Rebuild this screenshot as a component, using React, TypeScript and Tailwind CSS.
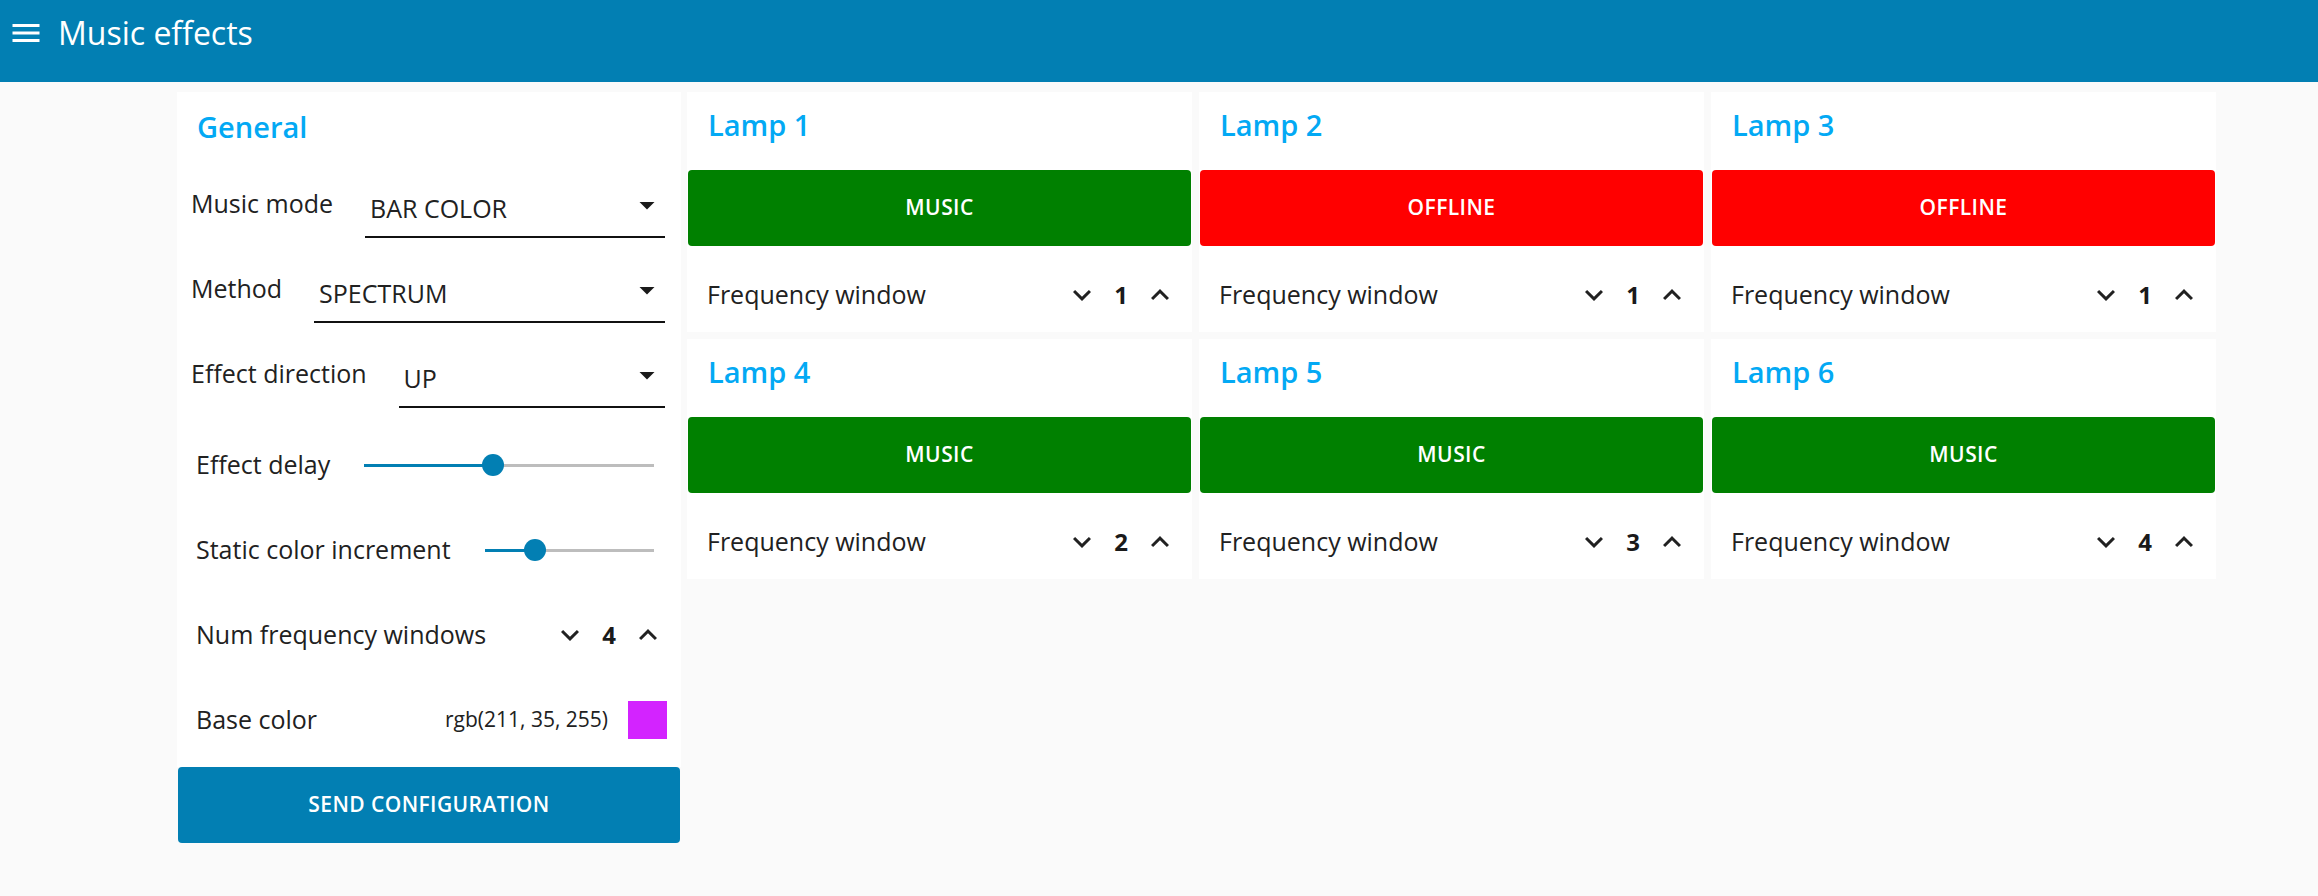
type Lamp = {
  name: string;
  status: "MUSIC" | "OFFLINE";
  freqWindow: number;
};

const lamps: Lamp[] = [
  { name: "Lamp 1", status: "MUSIC", freqWindow: 1 },
  { name: "Lamp 2", status: "OFFLINE", freqWindow: 1 },
  { name: "Lamp 3", status: "OFFLINE", freqWindow: 1 },
  { name: "Lamp 4", status: "MUSIC", freqWindow: 2 },
  { name: "Lamp 5", status: "MUSIC", freqWindow: 3 },
  { name: "Lamp 6", status: "MUSIC", freqWindow: 4 },
];

const MenuIcon = () => (
  <svg viewBox="0 0 24 24" className="w-9 h-9 fill-white">
    <path d="M3 18h18v-2H3v2zm0-5h18v-2H3v2zm0-7v2h18V6H3z" />
  </svg>
);

const ExpandMore = () => (
  <svg viewBox="0 0 24 24" className="w-9 h-9 fill-[#212121]">
    <path d="M16.59 8.59 12 13.17 7.41 8.59 6 10l6 6 6-6z" />
  </svg>
);

const ExpandLess = () => (
  <svg viewBox="0 0 24 24" className="w-9 h-9 fill-[#212121]">
    <path d="m12 8-6 6 1.41 1.41L12 10.83l4.59 4.58L18 14z" />
  </svg>
);

const ArrowDropDown = () => (
  <svg viewBox="0 0 24 24" className="w-9 h-9 mt-[1px] fill-[#1a1a1a]">
    <path d="M7 10l5 5 5-5z" />
  </svg>
);

const Stepper = ({ value }: { value: number }) => (
  <div className="flex items-center">
    <ExpandMore />
    <span className="w-[42px] text-center text-[24px] font-bold text-[#1a1a1a]">
      {value}
    </span>
    <ExpandLess />
  </div>
);

const SelectRow = ({
  label,
  value,
  last,
}: {
  label: string;
  value: string;
  last?: boolean;
}) => (
  <div
    className={`flex items-start pl-[14px] pr-[16px] ${last ? "h-[66px]" : "h-[85px]"}`}
  >
    <span className="leading-[34px] whitespace-nowrap">{label}</span>
    <div className="ml-[32px] flex-1 flex items-start h-[52px] border-b-2 border-[#111]">
      <span className="flex-1 pt-[5px] pl-[5px] leading-[34px]">{value}</span>
      <ArrowDropDown />
    </div>
  </div>
);

const Slider = ({ value }: { value: number }) => (
  <div className="relative flex-1 h-[22px]">
    <div className="absolute left-0 right-0 top-[10px] h-[3px] bg-[#bdbdbd]" />
    <div
      className="absolute left-0 top-[10px] h-[3px] bg-[#027fb3]"
      style={{ width: `${value}%` }}
    />
    <div
      className="absolute top-0 -ml-[11px] w-[22px] h-[22px] rounded-full bg-[#027fb3]"
      style={{ left: `${value}%` }}
    />
  </div>
);

const SliderRow = ({ label, value }: { label: string; value: number }) => (
  <div className="flex items-center h-[85px] pl-[19px] pr-[27px]">
    <span className="whitespace-nowrap">{label}</span>
    <div className="ml-[34px] flex-1 flex">
      <Slider value={value} />
    </div>
  </div>
);

const LampCard = ({ lamp }: { lamp: Lamp }) => (
  <div className="w-[505px] h-[240px] bg-white flex flex-col">
    <div className="h-[78px] pt-[13px] pl-[21px] text-[29px] leading-[40px] font-semibold text-[#03a9f4]">
      {lamp.name}
    </div>
    <div
      className={`h-[76px] mx-[1px] rounded-[4px] flex items-center justify-center text-white text-[21px] font-semibold tracking-[0.02em] ${
        lamp.status === "MUSIC" ? "bg-[#008000]" : "bg-[#ff0000]"
      }`}
    >
      {lamp.status}
    </div>
    <div className="mt-[11px] h-[75px] flex items-center pl-[20px] pr-[14px]">
      <span className="flex-1">Frequency window</span>
      <Stepper value={lamp.freqWindow} />
    </div>
  </div>
);

export default function App() {
  return (
    <div className="min-h-screen bg-[#fafafa] font-['Open_Sans',sans-serif] text-[25px] text-[#212121]">
      <header className="h-[82px] bg-[#027fb3]">
        <div className="h-[66px] flex items-center pl-[8px]">
          <MenuIcon />
          <span className="ml-[14px] text-[32px] text-white">Music effects</span>
        </div>
      </header>

      <main className="pt-[10px] pl-[177px] flex items-start gap-[6px]">
        <div className="w-[504px] flex flex-col">
          <div className="bg-white h-[675px]">
            <div className="h-[94px] pt-[15px] pl-[20px] text-[29px] leading-[40px] font-semibold text-[#03a9f4]">
              General
            </div>
            <SelectRow label="Music mode" value="BAR COLOR" />
            <SelectRow label="Method" value="SPECTRUM" />
            <SelectRow label="Effect direction" value="UP" last />
            <SliderRow label="Effect delay" value={44.3} />
            <SliderRow label="Static color increment" value={30} />
            <div className="flex items-center h-[85px] pl-[19px] pr-[15px]">
              <span className="flex-1">Num frequency windows</span>
              <Stepper value={4} />
            </div>
            <div className="flex items-center h-[85px] pl-[19px] pr-[14px]">
              <span className="flex-1">Base color</span>
              <span className="text-[21px]">rgb(211, 35, 255)</span>
              <div className="ml-[20px] w-[39px] h-[38px] bg-[#d323ff]" />
            </div>
          </div>
          <button className="h-[76px] mx-[1px] rounded-[4px] bg-[#027fb3] text-white text-[21px] font-semibold tracking-[0.02em]">
            SEND CONFIGURATION
          </button>
        </div>

        <div className="grid grid-cols-[repeat(3,505px)] gap-[7px]">
          {lamps.map((lamp) => (
            <LampCard key={lamp.name} lamp={lamp} />
          ))}
        </div>
      </main>
    </div>
  );
}
